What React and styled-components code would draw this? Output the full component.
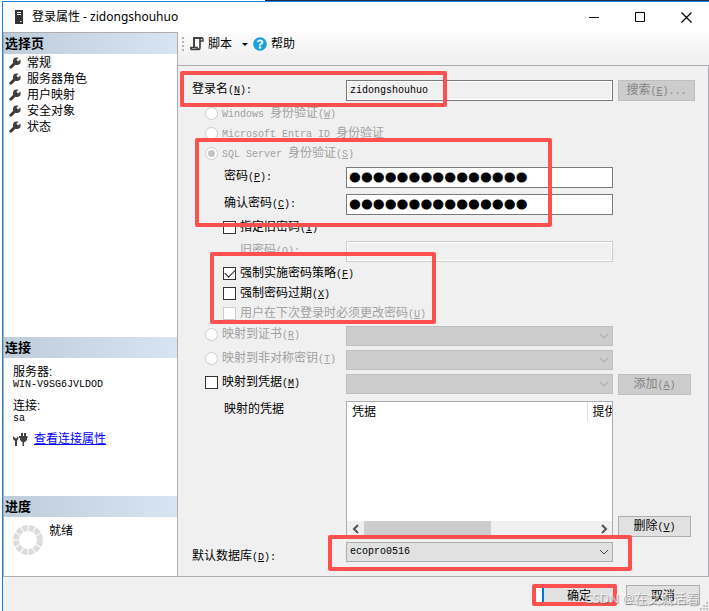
import React, { useState } from 'react';
import styled, { createGlobalStyle } from 'styled-components';
import { FaQuestionCircle } from 'react-icons/fa';

const GlobalStyle = createGlobalStyle`
    * {
        box-sizing: border-box;
    }
    body {
        margin: 0;
        color: #000;
        background: #fff;
        font: 12px/16px "Liberation Sans", "Noto Sans CJK SC", sans-serif;
    }
    button, input, select {
        margin: 0;
        font: inherit;
        color: inherit;
    }
`;

//Icons
const ServerIcon = () => (
    <svg width="10" height="15" viewBox="0 0 10 15" aria-hidden="true">
        <path d="M1 0h8v14H1z" fill="#333" />
        <path d="M3 2.5h4M3 4.5h4" stroke="#fff" />
        <path d="M6 11.5h1.5" stroke="#fff" />
    </svg>
);

const WrenchIcon = () => (
    <svg width="12" height="12" viewBox="0 0 12 12" fill="none" aria-hidden="true">
        <path d="M1.8 10.200L6.500 5.500" stroke="#3c3c3c" strokeWidth="3" strokeLinecap="round" />
        <circle cx="7.800" cy="4.200" r="3.800" fill="#3c3c3c" />
        <path d="M8.300 3.700L12 0" stroke="#fff" strokeWidth="2.600" />
    </svg>
);

const ScriptIcon = () => (
    <svg width="14" height="14" viewBox="0 0 14 14" fill="none" stroke="#424242" aria-hidden="true">
        <path d="M4 10V1h8.500" strokeWidth="2" />
        <path d="M12 1q1 0 1 1v2h-3" strokeWidth="1.500" />
        <path d="M10 1v9.500Q10 12.500 8 12.500H2q-1.300 0-1.300-2H7q0 2 1.500 2" strokeWidth="1.700" />
    </svg>
);

const PlugIcon = () => (
    <svg width="15" height="14" viewBox="0 0 15 14" fill="#424242" aria-hidden="true">
        <path d="M0 4l2 2 1.500.5L5 4l.5 2.500L4 9v5H2V9L0 7z" />
        <path d="M7 4h1V1h2v3h1V1h2v3h1.500v2H14v2l-2 2h-1v4H9.500v-4H9L7 8V6H6V4z" />
    </svg>
);

const SpinnerIcon = () => (
    <svg width="32" height="32" viewBox="0 0 32 32" aria-hidden="true">
        <circle cx="16" cy="16" r="12" fill="none" stroke="#dcdcdc" strokeWidth="6" strokeDasharray="5.2 1.083" strokeDashoffset="-0.5" />
    </svg>
);

const Chevron = ({ dir = 'down', color = '#555', weight = 1 }) => {
    const d = {
        down: 'M1 3l4 4 4-4',
        left: 'M7 1L3 5l4 4',
        right: 'M3 1l4 4-4 4',
    };
    return (
        <svg width="10" height="10" viewBox="0 0 10 10" fill="none" stroke={color} strokeWidth={weight} aria-hidden="true">
            <path d={d[dir]} />
        </svg>
    );
};

//Access key after a caption, e.g. (N):
const Key = ({ k, after }) => (
    <Latin>(<u>{k}</u>){after}</Latin>
);

const pages = ['常规', '服务器角色', '用户映射', '安全对象', '状态'];
const secret = 'x'.repeat(15);

const Sidebar = () => {
    const [page, setPage] = useState('常规');
    return (
        <Aside>
            <SectionTitle>选择页</SectionTitle>
            <PageList>
                {pages.map((name) => (
                    <li key={name}>
                        <PageButton type="button" $active={name === page} onClick={() => setPage(name)}>
                            <WrenchIcon />
                            <span>{name}</span>
                        </PageButton>
                    </li>
                ))}
            </PageList>

            <SectionTitle>连接</SectionTitle>
            <Connection>
                <dl>
                    <dt>服务器:</dt>
                    <dd>WIN-V9SG6JVLDOD</dd>
                    <dt>连接:</dt>
                    <dd>sa</dd>
                </dl>
                <ConnectionLink>
                    <PlugIcon />
                    <a href="#connection">查看连接属性</a>
                </ConnectionLink>
            </Connection>

            <SectionTitle>进度</SectionTitle>
            <Progress>
                <SpinnerIcon />
                <span>就绪</span>
            </Progress>
        </Aside>
    );
};

const Combo = ({ id, label, disabled, children }) => (
    <ComboBox>
        <select id={id} aria-label={label} disabled={disabled}>{children}</select>
        <Chevron color={disabled ? '#a0a0a0' : '#444'} />
    </ComboBox>
);

const LoginForm = () => (
    <Form>
        <Row>
            <Label htmlFor="login">登录名<Key k="N" after=":" /></Label>
            <TextField id="login" defaultValue="zidongshouhuo" readOnly />
            <Button type="button" disabled>搜索<Key k="E" after="..." /></Button>
        </Row>

        <Choice $indent={13} $top={2} $disabled>
            <input type="radio" name="auth" disabled />
            <span><Latin>Windows </Latin>身份验证<Key k="W" /></span>
        </Choice>
        <Choice $indent={13} $disabled>
            <input type="radio" name="auth" disabled />
            <span><Latin>Microsoft Entra ID </Latin>身份验证</span>
        </Choice>
        <Choice $indent={13} $disabled>
            <input type="radio" name="auth" defaultChecked disabled />
            <span><Latin>SQL Server </Latin>身份验证<Key k="S" /></span>
        </Choice>

        <Row $top={4}>
            <Label htmlFor="password" $indent={32}>密码<Key k="P" after=":" /></Label>
            <PasswordField id="password" type="password" defaultValue={secret} />
        </Row>
        <Row $top={6}>
            <Label htmlFor="confirm" $indent={32}>确认密码<Key k="C" after=":" /></Label>
            <PasswordField id="confirm" type="password" defaultValue={secret} />
        </Row>
        <Choice $indent={31} $top={2}>
            <input type="checkbox" />
            <span>指定旧密码<Key k="I" /></span>
        </Choice>
        <Row $top={4}>
            <Label htmlFor="old" $indent={48} $disabled>旧密码<Key k="O" after=":" /></Label>
            <TextField id="old" type="password" disabled />
        </Row>

        <Choice $indent={31} $top={1}>
            <input type="checkbox" defaultChecked />
            <span>强制实施密码策略<Key k="F" /></span>
        </Choice>
        <Choice $indent={31}>
            <input type="checkbox" />
            <span>强制密码过期<Key k="X" /></span>
        </Choice>
        <Choice $indent={31} $disabled>
            <input type="checkbox" disabled />
            <span>用户在下次登录时必须更改密码<Key k="U" /></span>
        </Choice>

        <Row $top={3}>
            <Choice $indent={13} $compact $disabled>
                <input type="radio" name="auth" disabled />
                <span>映射到证书<Key k="R" /></span>
            </Choice>
            <Combo label="证书" disabled />
        </Row>
        <Row $top={4}>
            <Choice $indent={13} $compact $disabled>
                <input type="radio" name="auth" disabled />
                <span>映射到非对称密钥<Key k="T" /></span>
            </Choice>
            <Combo label="非对称密钥" disabled />
        </Row>
        <Row $top={4}>
            <Choice $indent={13} $compact>
                <input type="checkbox" />
                <span>映射到凭据<Key k="M" /></span>
            </Choice>
            <Combo label="凭据" disabled />
            <Button type="button" $narrow disabled>添加<Key k="A" /></Button>
        </Row>

        <Row $top={6}>
            <Caption>映射的凭据</Caption>
            <ListBox>
                <table>
                    <thead>
                        <tr>
                            <th>凭据</th>
                            <th>提供程序</th>
                        </tr>
                    </thead>
                </table>
                <ScrollBar>
                    <button type="button" aria-label="向左"><Chevron dir="left" weight={2} /></button>
                    <div><Thumb /></div>
                    <button type="button" aria-label="向右"><Chevron dir="right" weight={2} /></button>
                </ScrollBar>
            </ListBox>
            <Button type="button" $narrow $bottom>删除<Key k="V" /></Button>
        </Row>

        <Row $top={5}>
            <Label htmlFor="database" $drop={5}>默认数据库<Key k="D" after=":" /></Label>
            <Combo id="database">
                <option>ecopro0516</option>
            </Combo>
        </Row>
    </Form>
);

const App = () => (
    <>
        <GlobalStyle />
        <Backdrop>
            <Window>
                <TitleBar>
                    <ServerIcon />
                    <h1>登录属性 - zidongshouhuo</h1>
                    <WindowButton type="button" aria-label="最小化">
                        <svg width="11" height="11"><path d="M0 5.500h10" stroke="#000" /></svg>
                    </WindowButton>
                    <WindowButton type="button" aria-label="最大化">
                        <svg width="11" height="11"><path d="M.5.5h9v9h-9z" fill="none" stroke="#000" /></svg>
                    </WindowButton>
                    <WindowButton type="button" aria-label="关闭">
                        <svg width="11" height="11"><path d="M.5.5l10 10M10.500.5l-10 10" stroke="#000" strokeWidth="1.2" /></svg>
                    </WindowButton>
                </TitleBar>

                <Body>
                    <Sidebar />
                    <Content>
                        <Toolbar>
                            <Grip />
                            <ToolButton type="button"><ScriptIcon />脚本<Caret /></ToolButton>
                            <ToolButton type="button"><FaQuestionCircle size={14} color="#1ba1e2" />帮助</ToolButton>
                        </Toolbar>
                        <LoginForm />
                    </Content>
                </Body>

                <Footer>
                    <OkButton type="button">确定</OkButton>
                    <CancelButton type="button">取消</CancelButton>
                    <SizeGrip width="8" height="8" viewBox="0 0 8 8" aria-hidden="true">
                        <path d="M6 0h2v2H6zM3 3h2v2H3zM6 3h2v2H6zM0 6h2v2H0zM3 6h2v2H3zM6 6h2v2H6z" />
                    </SizeGrip>
                </Footer>
            </Window>

            <Marker $x={180} $y={71} $w={267} $h={36} />
            <Marker $x={195} $y={138} $w={357} $h={89} />
            <Marker $x={210} $y={252} $w={226} $h={72} />
            <Marker $x={328} $y={535} $w={304} $h={36} />
            <Marker $x={532} $y={584} $w={85} $h={22} />
            <Watermark>CSDN @在文城活着</Watermark>
        </Backdrop>
    </>
);

//Window frame
const Backdrop = styled.div`
    position: relative;
    display: flex;
    min-height: 100vh;
    padding: 1px 0 0 2px;
    background: linear-gradient(to right, #fff 265px, #1f2d4d 265px) top / 100% 1px no-repeat;
`;

const Window = styled.div`
    flex: 1;
    min-width: 0;
    display: flex;
    flex-direction: column;
    border-top: 1px solid #1883d7;
    border-left: 1px solid #1883d7;
    background: #f0f0f0;
`;

const TitleBar = styled.header`
    display: flex;
    align-items: center;
    height: 30px;
    padding-left: 11px;
    background: #fff;
    h1 {
        flex: 1;
        margin: 0 0 0 8px;
        font: 12px/16px "Noto Sans", "Noto Sans CJK SC", sans-serif;
    }
`;

const WindowButton = styled.button`
    display: flex;
    align-items: center;
    justify-content: center;
    width: 46px;
    height: 30px;
    padding: 0;
    border: 0;
    background: none;
`;

const Body = styled.div`
    flex: 1;
    display: flex;
    border-bottom: 1px solid #adadb2;
`;

const Content = styled.main`
    flex: 1;
    min-width: 0;
    display: flex;
    flex-direction: column;
`;

//Sidebar
const Aside = styled.aside`
    display: flex;
    flex-direction: column;
    width: 175px;
    border: 1px solid #adadb2;
    border-bottom: 0;
    background: #fff;
`;

const SectionTitle = styled.h2`
    margin: 0;
    padding: 0 1px;
    font-size: 13px;
    line-height: 21px;
    background: linear-gradient(to right, #bfcddb, #d7e4f2);
`;

const PageList = styled.ul`
    flex: 1;
    margin: 0;
    padding: 1px 5px 0;
    list-style: none;
`;

const PageButton = styled.button`
    display: flex;
    align-items: center;
    gap: 5px;
    height: 16px;
    padding: 0;
    border: 0;
    background: none;
    span {
        padding: 0 1px;
        background: ${(props) => (props.$active ? '#f0f0f0' : 'none')};
    }
`;

const Connection = styled.div`
    min-height: 138px;
    padding: 7px 9px;
    dl {
        margin: 0;
    }
    dt {
        line-height: 14px;
    }
    dd {
        margin: 0 0 8px;
        font: 10px/12px "Liberation Mono", monospace;
    }
    dd:last-child {
        margin-bottom: 6px;
    }
`;

const ConnectionLink = styled.div`
    display: flex;
    align-items: center;
    gap: 6px;
    a {
        color: #00f;
    }
`;

const Progress = styled.div`
    display: flex;
    gap: 5px;
    min-height: 59px;
    padding: 6px 8px;
    svg {
        margin-top: 1px;
    }
`;

//Toolbar
const Toolbar = styled.div`
    display: flex;
    align-items: center;
    height: 33px;
    padding: 0 4px 9px;
    background: linear-gradient(#fdfdfd, #f0f0f0 80%);
`;

const Grip = styled.span`
    width: 2px;
    height: 14px;
    margin-right: 6px;
    background: repeating-linear-gradient(#b4b4b4 0 2px, transparent 2px 4px);
`;

const ToolButton = styled.button`
    display: flex;
    align-items: center;
    gap: 4px;
    padding: 0;
    margin-right: 5px;
    border: 0;
    background: none;
`;

const Caret = styled.span`
    margin-left: 6px;
    border: 3px solid transparent;
    border-top-color: #000;
    border-bottom: 0;
`;

//Form
const Form = styled.form`
    flex: 1;
    padding: 14px 13px 9px 14px;
    border-top: 1px solid #adadb2;
    border-right: 1px solid #adadb2;
`;

const Row = styled.div`
    display: grid;
    grid-template-columns: 154px 1fr 82px;
    align-items: start;
    margin-top: ${(props) => props.$top || 0}px;
`;

const Latin = styled.span`
    white-space: pre;
    font-family: "Liberation Mono", monospace;
    font-size: 10px;
`;

const Label = styled.label`
    padding-top: ${(props) => props.$drop || 0}px;
    padding-left: ${(props) => props.$indent || 0}px;
    line-height: 18px;
    color: ${(props) => (props.$disabled ? '#a0a0a0' : '#000')};
`;

const Caption = styled.span`
    padding-left: 32px;
`;

const Choice = styled.label`
    display: flex;
    align-items: center;
    gap: 4px;
    height: ${(props) => (props.$compact ? 16 : 20)}px;
    margin-top: ${(props) => props.$top || 0}px;
    padding-left: ${(props) => props.$indent}px;
    white-space: nowrap;
    color: ${(props) => (props.$disabled ? '#a0a0a0' : '#000')};
    > span {
        padding-top: 2px;
        line-height: 18px;
    }
    input {
        appearance: none;
        display: grid;
        place-items: center;
        width: 13px;
        height: 13px;
        border: 1px solid #333;
        background: #fff;
    }
    input:disabled {
        border-color: #ccc;
    }
    input[type='radio'] {
        border-radius: 50%;
    }
    input[type='radio']:checked::after {
        content: '';
        width: 7px;
        height: 7px;
        border-radius: 50%;
        background: #c4c4c4;
    }
    input[type='checkbox']:checked::after {
        content: '';
        width: 9px;
        height: 5px;
        margin-bottom: 3px;
        border: solid #222;
        border-width: 0 0 1px 1px;
        transform: rotate(-45deg);
    }
`;

const TextField = styled.input`
    min-width: 0;
    height: 21px;
    padding: 0 3px;
    border: 1px solid #7a7a7a;
    background: #f0f0f0;
    box-shadow: inset 0 0 0 1px #fff;
    font: 10px/16px "Liberation Mono", monospace;
    &:disabled {
        border-color: #ccc;
    }
`;

const PasswordField = styled(TextField)`
    padding: 0 2px;
    background: #fff;
    font: 34px/18px "Liberation Sans", sans-serif;
    -webkit-text-stroke: 1px #000;
`;

const ComboBox = styled.div`
    position: relative;
    select {
        display: block;
        appearance: none;
        width: 100%;
        height: 20px;
        padding: 0 20px 0 3px;
        border: 1px solid #adadad;
        border-radius: 0;
        background: #e1e1e1;
        font: 10px/16px "Liberation Mono", monospace;
    }
    select:disabled {
        border-color: #bfbfbf;
        background: #ccc;
        opacity: 1;
    }
    svg {
        position: absolute;
        top: 5px;
        right: 4px;
        pointer-events: none;
    }
`;

const Button = styled.button`
    align-self: ${(props) => (props.$bottom ? 'end' : 'start')};
    width: ${(props) => (props.$narrow ? 73 : 77)}px;
    height: 21px;
    margin-left: 5px;
    padding: 1px 0 0;
    border: 1px solid #adadad;
    background: #e1e1e1;
    line-height: 16px;
    &:disabled {
        border-color: #bfbfbf;
        background: #ccc;
        color: #838383;
    }
`;

const ListBox = styled.div`
    display: flex;
    flex-direction: column;
    justify-content: space-between;
    min-width: 0;
    min-height: 136px;
    overflow: hidden;
    border: 1px solid #adadb2;
    background: #fff;
    table {
        width: 100%;
        table-layout: fixed;
        border-collapse: collapse;
    }
    th {
        height: 19px;
        padding: 0 0 0 5px;
        overflow: hidden;
        font-weight: normal;
        text-align: left;
        white-space: nowrap;
    }
    th:last-child {
        width: 25px;
        border-left: 1px solid #dedede;
    }
`;

const ScrollBar = styled.div`
    display: flex;
    height: 15px;
    background: #f0f0f0;
    button {
        display: flex;
        align-items: center;
        justify-content: center;
        width: 17px;
        padding: 0;
        border: 0;
        background: none;
    }
    div {
        flex: 1;
    }
`;

const Thumb = styled.span`
    display: block;
    width: 55%;
    height: 100%;
    background: #cdcdcd;
`;

//Footer
const Footer = styled.footer`
    position: relative;
    display: flex;
    justify-content: flex-end;
    gap: 10px;
    height: 34px;
    padding: 8px 9px 0;
`;

const OkButton = styled(Button)`
    width: 74px;
    height: 20px;
    margin: 0;
    border: 2px solid #0078d7;
    box-shadow: -6px 0 0 #fff;
`;

const CancelButton = styled(Button)`
    width: 74px;
    height: 20px;
    margin: 0;
`;

const SizeGrip = styled.svg`
    position: absolute;
    right: 1px;
    bottom: 1px;
    fill: #bfbfbf;
`;

//Marks laid over the window
const Marker = styled.div`
    position: absolute;
    left: ${(props) => props.$x}px;
    top: ${(props) => props.$y}px;
    width: ${(props) => props.$w}px;
    height: ${(props) => props.$h}px;
    border: 4px solid #ff5050;
    border-radius: 2px;
    pointer-events: none;
`;

const Watermark = styled.span`
    position: absolute;
    right: 10px;
    bottom: 4px;
    font: 13px/18px "Noto Sans", "Noto Sans CJK SC", sans-serif;
    color: rgba(255, 255, 255, 0.7);
    text-shadow: 1px 1px 1px rgba(90, 90, 90, 0.6);
    pointer-events: none;
`;

export default App;
